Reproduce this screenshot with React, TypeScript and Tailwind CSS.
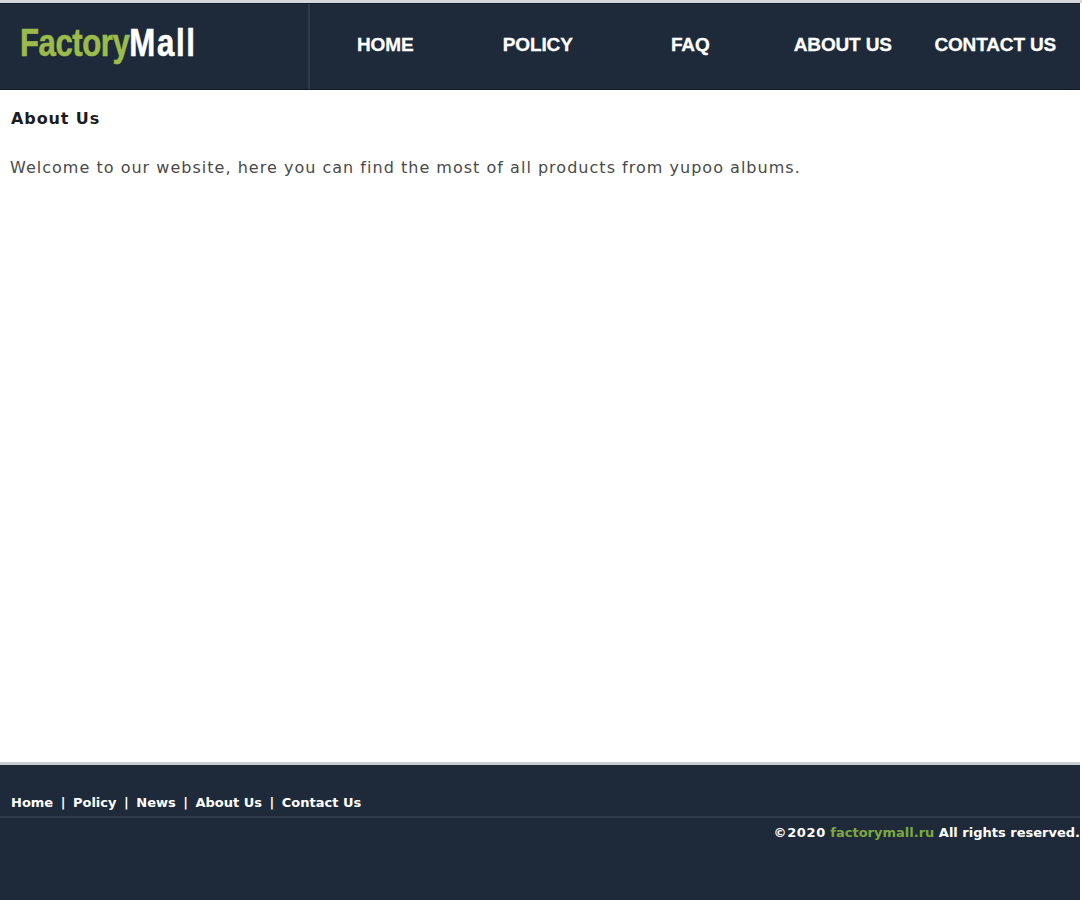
import React from 'react';

const navItems = ['HOME', 'POLICY', 'FAQ', 'ABOUT US', 'CONTACT US'];
const footerLinks = ['Home', 'Policy', 'News', 'About Us', 'Contact Us'];

const App: React.FC = () => {
  return (
    <div className="w-[1082px] h-[900px] bg-white flex flex-col overflow-hidden font-['DejaVu_Sans',sans-serif]">
      <div className="h-[3px] bg-[#d6d8da]" />
      <header className="h-[87px] w-[1080px] bg-[#1e2a3a] border-t border-b border-[#111a26] flex">
        <div className="w-[310px] border-r-2 border-[#2f3b4a] pl-[20px] pb-[8px] flex items-center">
          <span className="inline-block origin-left scale-x-[0.8] whitespace-nowrap font-['Liberation_Sans',sans-serif] font-bold text-[39px] leading-none [-webkit-text-stroke:0.6px]">
            <span className="text-[#9bbb4c] tracking-[-0.6px]">Factory</span>
            <span className="text-white tracking-[2px]">Mall</span>
          </span>
        </div>
        <nav className="flex-1 pb-[2px] flex items-center">
          {navItems.map((item) => (
            <a
              key={item}
              className="w-[152.5px] -ml-px mr-px text-center text-white font-bold text-[19px] tracking-[-0.15px] whitespace-nowrap font-['Liberation_Sans',sans-serif] [-webkit-text-stroke:0.3px]"
            >
              {item}
            </a>
          ))}
        </nav>
      </header>

      <main className="h-[672px] w-[1080px] px-[10px] pt-[18px]">
        <h1 className="text-[16px] leading-[22px] font-bold text-[#1c1c1c] tracking-[0.9px] pl-px">About Us</h1>
        <p className="mt-[27px] text-[16px] leading-[22px] text-[#4a4a4a] tracking-[1.02px] whitespace-nowrap">
          Welcome to our website, here you can find the most of all products from yupoo albums.
        </p>
      </main>

      <footer className="flex-1 w-[1080px] bg-[#1e2a3a] border-t-[3px] border-[#c9ccd0] text-[13px] font-bold text-white">
        <div className="h-[53px] pl-[11px] pt-[24px] border-b-2 border-[#2f3b4a] flex items-center gap-[7.5px] leading-none">
          {footerLinks.map((link, i) => (
            <React.Fragment key={link}>
              {i > 0 && <span>|</span>}
              <a>{link}</a>
            </React.Fragment>
          ))}
        </div>
        <div className="text-right leading-none mt-[8px] whitespace-nowrap">
          <span className="tracking-[0.6px]">©2020</span> <span className="text-[#7da83f]">factorymall.ru</span> All rights reserved.
        </div>
      </footer>
    </div>
  );
};

export default App;
